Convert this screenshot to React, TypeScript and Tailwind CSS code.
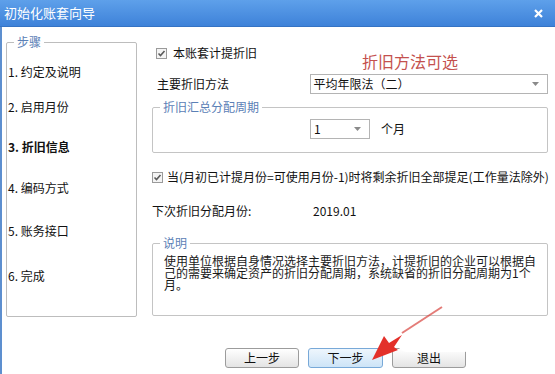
import React from 'react';

const steps = [
  { label: '1. 约定及说明', mt: 'mt-[16px]', bold: false },
  { label: '2. 启用月份', mt: 'mt-[21px]', bold: false },
  { label: '3. 折旧信息', mt: 'mt-[26px]', bold: true },
  { label: '4. 编码方式', mt: 'mt-[27px]', bold: false },
  { label: '5. 账务接口', mt: 'mt-[29px]', bold: false },
  { label: '6. 完成', mt: 'mt-[31px]', bold: false },
];

function CheckBox() {
  return (
    <svg width="11" height="11" viewBox="0 0 11 11" className="shrink-0">
      <rect x="0.5" y="0.5" width="10" height="10" fill="#f4f4f4" stroke="#9a9a9a" />
      <path d="M2.5 5.5 L4.5 7.5 L8.5 3" fill="none" stroke="#5a5a5a" strokeWidth="1.6" />
    </svg>
  );
}

function Select({ value, width }: { value: string; width: string }) {
  return (
    <div className={`${width} h-[20px] border border-[#b4b4b4] bg-white flex items-center justify-between pl-[3px] pr-[8px]`}>
      <span>{value}</span>
      <svg width="7" height="4" viewBox="0 0 7 4">
        <path d="M0 0 H7 L3.5 4 Z" fill="#8a8a8a" />
      </svg>
    </div>
  );
}

function Legend({ children }: { children: React.ReactNode }) {
  return <legend className="ml-[7px] px-[3px] leading-[14px] text-[#5b80b6]">{children}</legend>;
}

export default function App() {
  return (
    <div className="relative w-[555px] h-[374px] overflow-hidden bg-white text-[12px] leading-[14px] text-[#111] font-['Noto_Sans_CJK_SC',sans-serif]">
      {/* title bar */}
      <div className="h-[27px] flex items-center justify-between pl-[4px] pr-[12px] bg-linear-to-b from-[#5ea0ea] to-[#3e82d9] border-b border-[#3573c4]">
        <span className="text-white text-[13px]">初始化账套向导</span>
        <svg width="9" height="9" viewBox="0 0 9 9">
          <path d="M1 1 L8 8 M8 1 L1 8" stroke="#fff" strokeWidth="2.2" />
        </svg>
      </div>

      <div className="h-[347px] border-l-2 border-[#5d8fcf] flex flex-col">
        <div className="flex">
          {/* steps */}
          <fieldset className="mt-[8px] ml-[4px] w-[131px] h-[282px] border border-[#bdbdbd] rounded-[2px]">
            <Legend>步骤</Legend>
            {steps.map((s) => (
              <div key={s.label} className={`${s.mt} pl-[1px] ${s.bold ? 'font-bold' : ''}`}>
                {s.label}
              </div>
            ))}
          </fieldset>

          {/* main */}
          <div className="ml-[15px] w-[396px] flex flex-col">
            <div className="mt-[19px] pl-[4px] flex items-center gap-[6px]">
              <CheckBox />
              <span>本账套计提折旧</span>
            </div>

            <div className="mt-[14px] flex items-center">
              <span className="w-[158px] pl-[5px]">主要折旧方法</span>
              <Select value="平均年限法（二）" width="w-[239px]" />
            </div>

            <fieldset className="mt-[6px] border border-[#c4c4c4] rounded-[2px]">
              <Legend>折旧汇总分配周期</Legend>
              <div className="pl-[157px] pt-[5px] pb-[13px] flex items-center">
                <Select value="1" width="w-[60px]" />
                <span className="ml-[11px]">个月</span>
              </div>
            </fieldset>

            <div className="mt-[17px] flex items-center gap-[4px]">
              <CheckBox />
              <span className="whitespace-nowrap">当(月初已计提月份=可使用月份-1)时将剩余折旧全部提足(工作量法除外)</span>
            </div>

            <div className="mt-[20px] flex items-center">
              <span className="w-[161px]">下次折旧分配月份:</span>
              <span>2019.01</span>
            </div>

            <fieldset className="mt-[18px] h-[80px] border border-[#c4c4c4] rounded-[2px]">
              <Legend>说明</Legend>
              <p className="pl-[11px] pr-[8px] pt-[5px] leading-[12px] text-[#1a1a1a]">
                使用单位根据自身情况选择主要折旧方法，计提折旧的企业可以根据自己的需要来确定资产的折旧分配周期，系统缺省的折旧分配周期为1个月。
              </p>
            </fieldset>
          </div>
        </div>

        {/* buttons */}
        <div className="mt-[31px] pl-[223px] flex gap-[9px]">
          <button className="w-[74px] h-[20px] border border-[#9c9c9c] rounded-[3px] bg-linear-to-b from-white to-[#e4e4e4]">上一步</button>
          <button className="w-[75px] h-[20px] border border-[#78a9d8] rounded-[3px] bg-linear-to-b from-[#eef6fd] to-[#cde4f7]">下一步</button>
          <button className="w-[74px] h-[20px] border border-[#9c9c9c] rounded-[3px] bg-linear-to-b from-white to-[#e4e4e4]">退出</button>
        </div>
      </div>

      {/* annotations */}
      <span className="absolute left-[362px] top-[52px] text-[16px] leading-[18px] text-[#c4514e]">折旧方法可选</span>
      <div className="absolute left-[396px] top-[322px] w-[80px] h-[30px] bg-white rounded-[12px]" />
      <svg className="absolute left-[360px] top-[300px]" width="90" height="65" viewBox="0 0 90 65">
        <path d="M82 7 L42 33" stroke="#d9453f" strokeWidth="2" opacity="0.7" />
        <path d="M12 60 L24 36 L29 43 L42 35 L34 47 L38 50 Z" fill="#e3302a" />
      </svg>
    </div>
  );
}
